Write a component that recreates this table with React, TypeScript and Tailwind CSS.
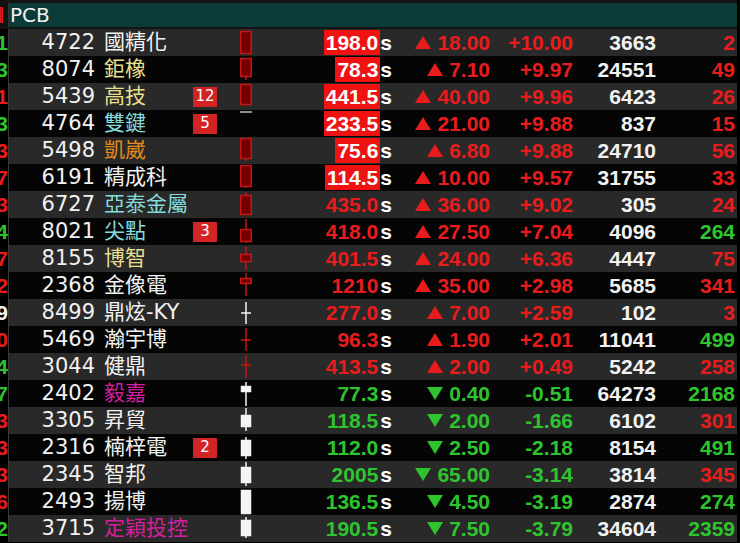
import React from 'react';

type Dir = 'up' | 'down';

interface CandleSpec {
  color: 'red' | 'white' | 'gray';
  wick?: [number, number];
  body?: [number, number];
  cross?: number;
  line?: number;
}

interface Row {
  edge: string;
  edgeColor: string;
  code: string;
  name: string;
  nameColor: string;
  badge?: string;
  candle: CandleSpec;
  price: string;
  limit?: boolean;
  dir: Dir;
  change: string;
  pct: string;
  vol: string;
  last: string;
  lastUp: boolean;
}

const RED = 'text-[#e81c1c]';
const GREEN = 'text-[#2ec42e]';

const rows: Row[] = [
  { edge: '1', edgeColor: GREEN, code: '4722', name: '國精化', nameColor: 'text-[#f2f2f2]', candle: { color: 'red', body: [2, 24] }, price: '198.0', limit: true, dir: 'up', change: '18.00', pct: '+10.00', vol: '3663', last: '2', lastUp: true },
  { edge: '3', edgeColor: GREEN, code: '8074', name: '鉅橡', nameColor: 'text-[#e6df8e]', candle: { color: 'red', body: [2, 20], wick: [2, 24] }, price: '78.3', limit: true, dir: 'up', change: '7.10', pct: '+9.97', vol: '24551', last: '49', lastUp: true },
  { edge: '1', edgeColor: RED, code: '5439', name: '高技', nameColor: 'text-[#e6df8e]', badge: '12', candle: { color: 'red', body: [1, 21] }, price: '441.5', limit: true, dir: 'up', change: '40.00', pct: '+9.96', vol: '6423', last: '26', lastUp: true },
  { edge: '3', edgeColor: GREEN, code: '4764', name: '雙鍵', nameColor: 'text-[#86dcdc]', badge: '5', candle: { color: 'gray', line: 2 }, price: '233.5', limit: true, dir: 'up', change: '21.00', pct: '+9.88', vol: '837', last: '15', lastUp: true },
  { edge: '3', edgeColor: RED, code: '5498', name: '凱崴', nameColor: 'text-[#e08a1e]', candle: { color: 'red', body: [1, 21], wick: [1, 24] }, price: '75.6', limit: true, dir: 'up', change: '6.80', pct: '+9.88', vol: '24710', last: '56', lastUp: true },
  { edge: '7', edgeColor: RED, code: '6191', name: '精成科', nameColor: 'text-[#f2f2f2]', candle: { color: 'red', body: [1, 22], wick: [1, 24] }, price: '114.5', limit: true, dir: 'up', change: '10.00', pct: '+9.57', vol: '31755', last: '33', lastUp: true },
  { edge: '3', edgeColor: RED, code: '6727', name: '亞泰金屬', nameColor: 'text-[#86dcdc]', candle: { color: 'red', body: [4, 23], wick: [1, 23] }, price: '435.0', dir: 'up', change: '36.00', pct: '+9.02', vol: '305', last: '24', lastUp: true },
  { edge: '4', edgeColor: GREEN, code: '8021', name: '尖點', nameColor: 'text-[#86dcdc]', badge: '3', candle: { color: 'red', body: [11, 23], wick: [1, 25] }, price: '418.0', dir: 'up', change: '27.50', pct: '+7.04', vol: '4096', last: '264', lastUp: false },
  { edge: '7', edgeColor: RED, code: '8155', name: '博智', nameColor: 'text-[#e6df8e]', candle: { color: 'red', body: [9, 16], wick: [2, 25] }, price: '401.5', dir: 'up', change: '24.00', pct: '+6.36', vol: '4447', last: '75', lastUp: true },
  { edge: '2', edgeColor: RED, code: '2368', name: '金像電', nameColor: 'text-[#f2f2f2]', candle: { color: 'red', body: [6, 11], wick: [1, 24] }, price: '1210', dir: 'up', change: '35.00', pct: '+2.98', vol: '5685', last: '341', lastUp: true },
  { edge: '9', edgeColor: 'text-[#f2f2f2]', code: '8499', name: '鼎炫-KY', nameColor: 'text-[#f2f2f2]', candle: { color: 'white', wick: [3, 25], cross: 14 }, price: '277.0', dir: 'up', change: '7.00', pct: '+2.59', vol: '102', last: '3', lastUp: true },
  { edge: '0', edgeColor: RED, code: '5469', name: '瀚宇博', nameColor: 'text-[#f2f2f2]', candle: { color: 'red', wick: [2, 25], cross: 14 }, price: '96.3', dir: 'up', change: '1.90', pct: '+2.01', vol: '11041', last: '499', lastUp: false },
  { edge: '4', edgeColor: GREEN, code: '3044', name: '健鼎', nameColor: 'text-[#f2f2f2]', candle: { color: 'red', wick: [2, 25], cross: 12 }, price: '413.5', dir: 'up', change: '2.00', pct: '+0.49', vol: '5242', last: '258', lastUp: true },
  { edge: '7', edgeColor: GREEN, code: '2402', name: '毅嘉', nameColor: 'text-[#d3209c]', candle: { color: 'white', body: [6, 11], wick: [2, 26] }, price: '77.3', dir: 'down', change: '0.40', pct: '-0.51', vol: '64273', last: '2168', lastUp: false },
  { edge: '3', edgeColor: RED, code: '3305', name: '昇貿', nameColor: 'text-[#f2f2f2]', candle: { color: 'white', body: [8, 19], wick: [1, 24] }, price: '118.5', dir: 'down', change: '2.00', pct: '-1.66', vol: '6102', last: '301', lastUp: true },
  { edge: '3', edgeColor: RED, code: '2316', name: '楠梓電', nameColor: 'text-[#f2f2f2]', badge: '2', candle: { color: 'white', body: [6, 21], wick: [3, 25] }, price: '112.0', dir: 'down', change: '2.50', pct: '-2.18', vol: '8154', last: '491', lastUp: false },
  { edge: '3', edgeColor: RED, code: '2345', name: '智邦', nameColor: 'text-[#f2f2f2]', candle: { color: 'white', body: [6, 21], wick: [1, 25] }, price: '2005', dir: 'down', change: '65.00', pct: '-3.14', vol: '3814', last: '345', lastUp: true },
  { edge: '6', edgeColor: RED, code: '2493', name: '揚博', nameColor: 'text-[#f2f2f2]', candle: { color: 'white', body: [2, 25] }, price: '136.5', dir: 'down', change: '4.50', pct: '-3.19', vol: '2874', last: '274', lastUp: false },
  { edge: '2', edgeColor: GREEN, code: '3715', name: '定穎投控', nameColor: 'text-[#d3209c]', candle: { color: 'white', body: [5, 20], wick: [2, 23] }, price: '190.5', dir: 'down', change: '7.50', pct: '-3.79', vol: '34604', last: '2359', lastUp: false },
];

const Candle = ({ spec }: { spec: CandleSpec }) => {
  const stroke = spec.color === 'red' ? '#c81414' : spec.color === 'gray' ? '#bdbdbd' : '#f4f4f4';
  const fill = spec.color === 'red' ? '#720000' : '#f4f4f4';
  return (
    <svg width="12" height="27" viewBox="0 0 12 27" className="block">
      {spec.wick && <line x1="6" x2="6" y1={spec.wick[0]} y2={spec.wick[1]} stroke={stroke} strokeWidth="1.5" />}
      {spec.cross !== undefined && <line x1="1" x2="11" y1={spec.cross} y2={spec.cross} stroke={stroke} strokeWidth="1.5" />}
      {spec.line !== undefined && <line x1="0" x2="12" y1={spec.line} y2={spec.line} stroke={stroke} strokeWidth="1.5" />}
      {spec.body && (
        <rect
          x={spec.color === 'red' ? 0.75 : 1.5}
          y={spec.body[0] + 0.5}
          width={spec.color === 'red' ? 10.5 : 9}
          height={spec.body[1] - spec.body[0]}
          fill={fill}
          stroke={stroke}
          strokeWidth="1.5"
        />
      )}
    </svg>
  );
};

const Tri = ({ dir }: { dir: Dir }) => (
  <svg width="16" height="13" viewBox="0 0 16 13" className="mr-[6px] shrink-0">
    {dir === 'up' ? <polygon points="8,0 16,13 0,13" fill="#e81c1c" /> : <polygon points="0,0 16,0 8,13" fill="#2ec42e" />}
  </svg>
);

const num = "font-['Liberation_Sans',Arial,sans-serif] font-bold text-[21px] leading-none";

export default function App() {
  return (
    <div className="w-[740px] h-[543px] bg-black overflow-hidden">
      <div className="w-[737px]">
        {/* header */}
        <div className="h-[29px] pt-[3px] bg-[#141414]">
          <div className="flex h-[24px] bg-[#0a3b39]">
            <div className="w-[8px] bg-[#111] flex items-center">
              <div className="w-[3px] h-[16px] bg-[#d01818]" />
            </div>
            <div className="w-px bg-[#333]" />
            <div className="pl-[1px] flex items-center text-[20px] leading-none text-[#f2f2f2] font-['DejaVu_Sans',sans-serif]">PCB</div>
          </div>
        </div>

        {rows.map((r, i) => {
          const up = r.dir === 'up';
          const color = up ? RED : GREEN;
          return (
            <div key={r.code} className={`flex h-[27px] items-center ${i % 2 === 0 ? 'bg-[#292929]' : 'bg-[#050505]'}`}>
              <div className="w-[8px] h-full overflow-hidden flex items-center justify-end bg-black">
                <span className={`${num} ${r.edgeColor}`}>{r.edge}</span>
              </div>
              <div className="w-px h-full bg-[#3a3a3a]" />
              <div className="w-[86px] text-right text-[21px] leading-none text-[#f2f2f2] font-['DejaVu_Sans',sans-serif]">{r.code}</div>
              <div className={`w-[98px] pl-[9px] whitespace-nowrap text-[21px] leading-none font-['DejaVu_Sans','Noto_Sans_CJK_TC',sans-serif] ${r.nameColor}`}>
                {r.name}
              </div>
              <div className="w-[24px] flex justify-center">
                {r.badge && (
                  <div className="w-[24px] h-[20px] bg-[#d22424] flex items-center justify-center text-white text-[15px] leading-none font-['DejaVu_Sans',sans-serif]">
                    {r.badge}
                  </div>
                )}
              </div>
              <div className="w-[23px]" />
              <Candle spec={r.candle} />
              <div className="w-[140px] h-full flex items-center justify-end">
                <span className={`${num} h-[25px] flex items-center px-[2px] ${r.limit ? 'bg-[#f01212] text-white' : color}`}>{r.price}</span>
                <span className={`${num} text-white`}>s</span>
              </div>
              <div className={`w-[98px] flex items-center justify-end ${num} ${color}`}>
                <Tri dir={r.dir} />
                {r.change}
              </div>
              <div className={`w-[83px] text-right ${num} ${color}`}>{r.pct}</div>
              <div className={`w-[83px] text-right ${num} text-[#f2f2f2]`}>{r.vol}</div>
              <div className={`w-[79px] text-right ${num} ${r.lastUp ? RED : GREEN}`}>{r.last}</div>
              <div className="w-[2px]" />
            </div>
          );
        })}
      </div>
    </div>
  );
}
